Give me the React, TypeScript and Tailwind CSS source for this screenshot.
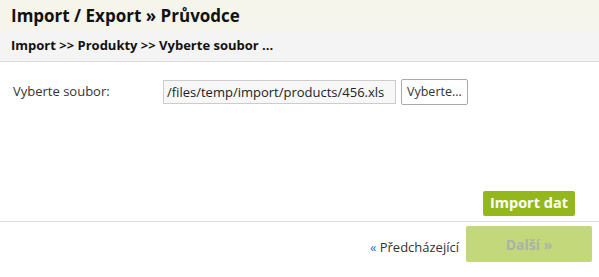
export default function App() {
  return (
    <div className="w-[599px] h-[277px] bg-white text-[#222] font-['Open_Sans',sans-serif] flex flex-col">
      <header className="border-b border-[#dddddd]">
        <div className="h-[30px] bg-[#f6f5ec] px-[11px] flex items-center">
          <h1 className="text-[17px] font-bold text-[#111] leading-none">Import / Export » Průvodce</h1>
        </div>
        <div className="h-[31px] bg-[#f4f4f4] px-[11px] flex items-center">
          <p className="text-[13px] font-bold text-[#111]">Import &gt;&gt; Produkty &gt;&gt; Vyberte soubor ...</p>
        </div>
      </header>

      <div className="flex-1 flex flex-col px-[13px]">
        <div className="flex items-center mt-[17px]">
          <label className="w-[150px] text-[13px] text-[#333]">Vyberte soubor:</label>
          <input
            readOnly
            value="/files/temp/import/products/456.xls"
            className="w-[233px] h-[24px] border border-[#cccccc] bg-[#f7f7f7] px-[3px] text-[13px] text-[#222] outline-none"
          />
          <button className="ml-[5px] h-[26px] px-[5px] border border-[#a9a9a9] rounded-[2px] bg-white text-[12.5px] text-[#333]">
            Vyberte...
          </button>
        </div>
        <div className="flex-1" />
        <div className="flex justify-end pr-[11px] mb-[5px]">
          <button className="h-[25px] px-[7px] rounded-[2px] bg-[#94b81b] text-white text-[14.5px] font-bold leading-none">
            Import dat
          </button>
        </div>
      </div>

      <footer className="h-[56px] border-t border-[#dddddd] flex items-start justify-end pr-[7px] pt-[4px]">
        <a className="mt-[12px] text-[13px] text-[#333] mr-[7px]">
          <span className="text-[#2a6ebb]">«</span> Předcházející
        </a>
        <button className="w-[126px] h-[36px] rounded-[2px] bg-[#c2d87b] text-[#aab3a8] text-[14px] font-bold">
          Další »
        </button>
      </footer>
    </div>
  )
}
